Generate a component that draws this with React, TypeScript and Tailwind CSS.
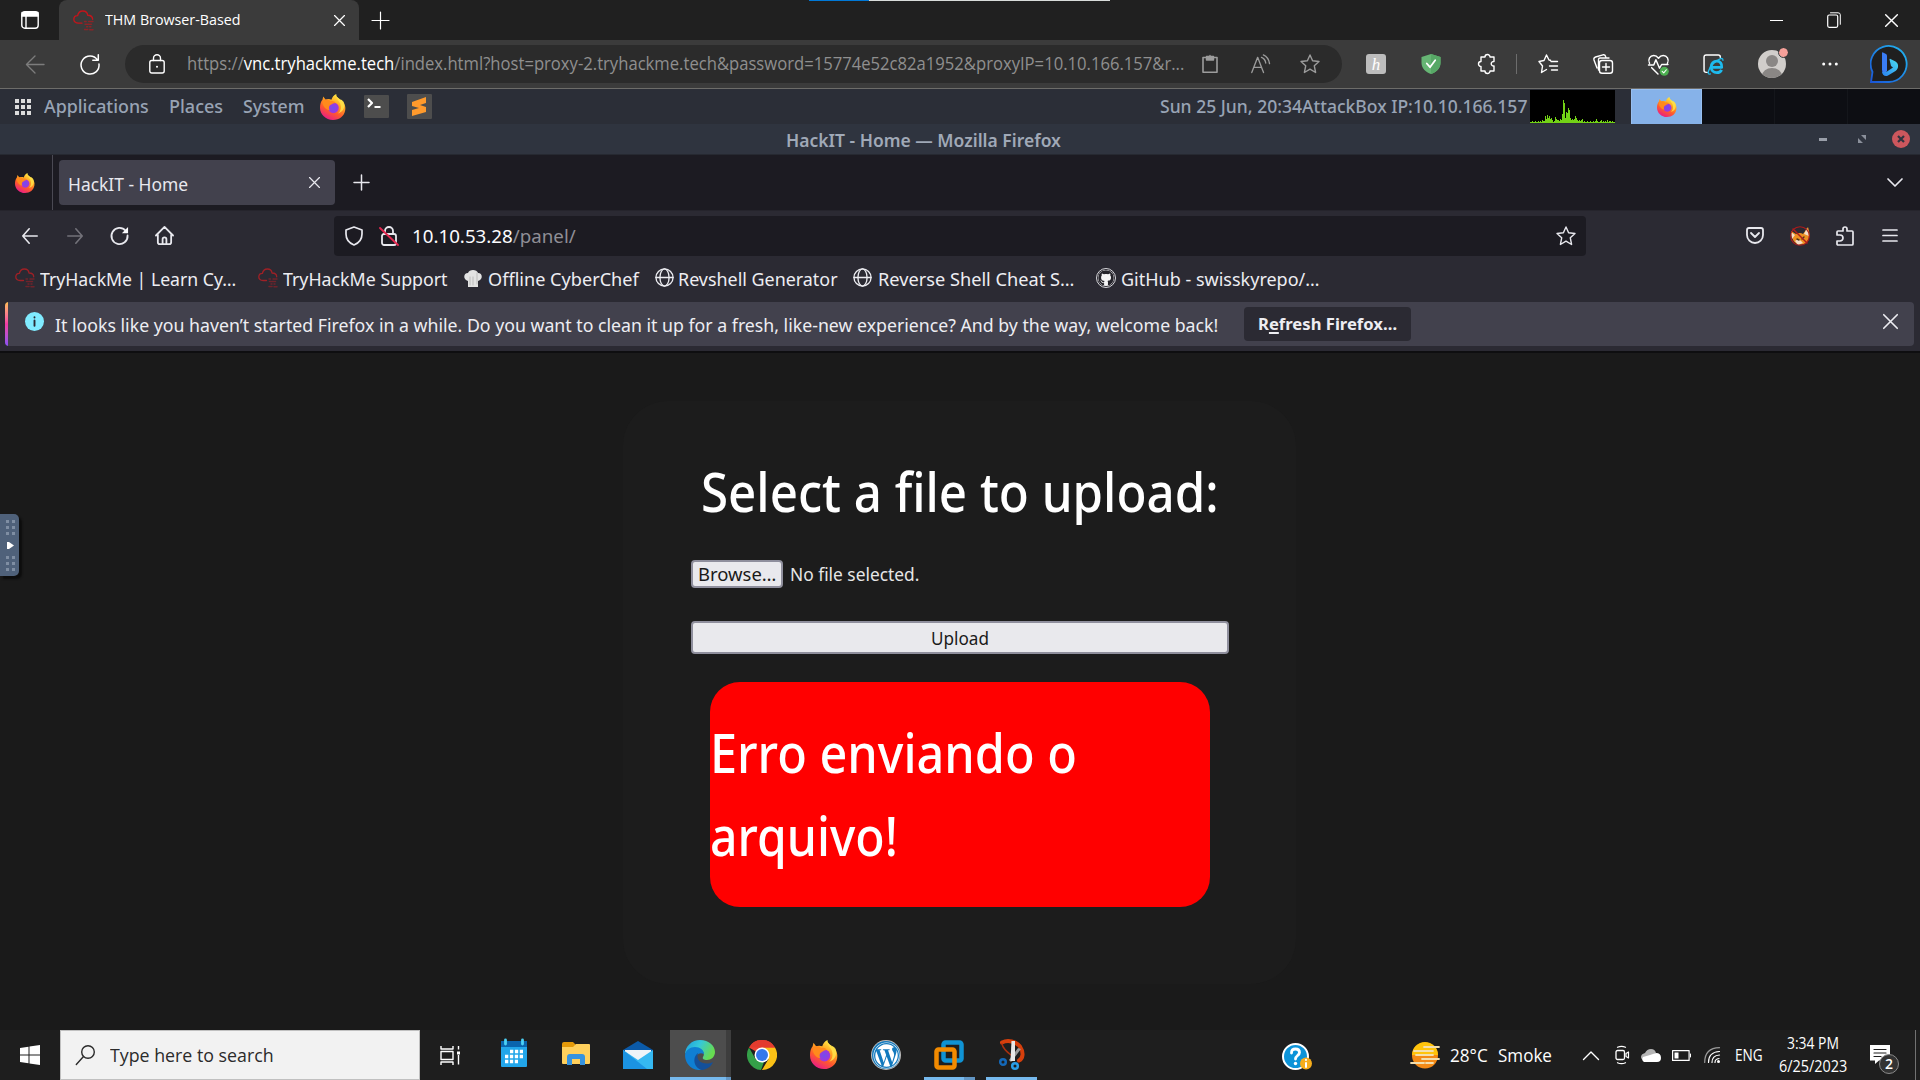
import React, { useLayoutEffect, useRef, useState } from "react";
import { FaWordpress, FaGithub } from "react-icons/fa";

/** One line of text condensed or widened to fill the width of its box. */
function Fit({ className, children }: { className: string; children: React.ReactNode }) {
  const outer = useRef<HTMLSpanElement>(null);
  const inner = useRef<HTMLSpanElement>(null);
  const [scale, setScale] = useState(1);
  useLayoutEffect(() => {
    const measure = () => {
      if (outer.current && inner.current) {
        setScale(outer.current.offsetWidth / inner.current.offsetWidth);
      }
    };
    measure();
    document.fonts.ready.then(measure);
  }, []);
  return (
    <span ref={outer} className={"block shrink-0 whitespace-nowrap " + className}>
      <span ref={inner} className="inline-block origin-left" style={{ transform: `scaleX(${scale})` }}>
        {children}
      </span>
    </span>
  );
}

type IconProps = { className: string; box?: string; children: React.ReactNode };
function Icon({ className, box = "0 0 20 20", children }: IconProps) {
  return (
    <svg
      viewBox={box}
      className={"block shrink-0 overflow-visible " + className}
      fill="none"
      stroke="currentColor"
      strokeWidth="1.4"
      strokeLinecap="round"
      strokeLinejoin="round"
    >
      {children}
    </svg>
  );
}

function Firefox({ className }: { className: string }) {
  return (
    <svg viewBox="0 0 32 32" preserveAspectRatio="none" className={"block shrink-0 " + className}>
      <defs>
        <linearGradient id="ffBody" x1="0.8" y1="0.05" x2="0.3" y2="1">
          <stop offset="0" stopColor="#fff34a" />
          <stop offset="0.35" stopColor="#ffa321" />
          <stop offset="0.65" stopColor="#ff5a2c" />
          <stop offset="1" stopColor="#e8198b" />
        </linearGradient>
        <radialGradient id="ffCore">
          <stop offset="0" stopColor="#6f4df0" />
          <stop offset="1" stopColor="#a436d9" />
        </radialGradient>
      </defs>
      <path d="M20 0c0 3 1 4 4 6 1 1 1 2 2 1l1 1c3 4 5 7 4 12-1 7-7 12-15 12C7 32 0 25 0 17c0-4 1-8 3-10l1-4 3 4c2-1 5-1 7 0 1-3 3-6 6-7z" fill="url(#ffBody)" />
      <circle cx="16.500" cy="17" r="6.600" fill="url(#ffCore)" />
      <path d="M3 9c3-3 7-3 10 0 3-1 5 0 6 2-2 0-4 1-5 2-2 1-3 2-3 4 0 1 0 2 1 3-4 0-9-4-9-11z" fill="#ff8a1c" />
      <path d="M20 0c0 5 2 7 4 10 3 5 2 11-2 14 6-2 8-6 8-11 0-5-4-6-6-7-3-2-4-3-4-6z" fill="#ffe24a" opacity=".85" />
    </svg>
  );
}

function ThmCloud({ className, color }: { className: string; color: string }) {
  return (
    <Icon className={className}>
      <g stroke={color} strokeWidth="1.3">
        <path d="M8.5 12.500H5C2.500 12.500 .8 11 .8 9s1.500-3.600 3.600-3.600C5 2.600 6.800 1 9.300 1c2.700 0 4.500 1.800 4.700 4 2.800.1 4.700 1.800 4.700 3.800" />
        <path d="M11 11h2M15 11h4M11.500 13.500h6M13 16h1M16 16h1M11 18.500h3M16 18.800h3" strokeDasharray="1.500 1" strokeWidth="1.500" opacity=".6" />
      </g>
    </Icon>
  );
}

function Globe({ className }: { className: string }) {
  return (
    <Icon className={className}>
      <circle cx="10" cy="10" r="9" />
      <ellipse cx="10" cy="10" rx="4.800" ry="9" />
      <path d="M1 10h18" />
    </Icon>
  );
}

const Star = ({ className }: { className: string }) => (
  <Icon className={className}>
    <path d="M10 1l2.600 5.800 6.400.7-4.700 4.300 1.300 6.700L10 15.200l-5.600 3.300 1.300-6.700L1 7.500l6.400-.7z" />
  </Icon>
);

const Cross = ({ className }: { className: string }) => (
  <Icon className={className} box="0 0 10 10">
    <path d="M.5.5l9 9M9.500.5l-9 9" strokeWidth="1.1" />
  </Icon>
);

function EdgeTabs() {
  return (
    <div className="flex h-10 items-center bg-[#202020] text-white">
      <Icon className="ml-[21px] size-[18px]" box="0 0 18 18">
        <rect x=".8" y=".8" width="16.400" height="16.400" rx="3" />
        <path d="M1 1.500h16V5H1z" fill="white" />
        <path d="M5 5v12" />
      </Icon>
      <div className="ml-5 flex h-10 w-[300px] items-center rounded-t-lg bg-[#3b3b3b]">
        <ThmCloud className="ml-3.5 h-[21px] w-[21px]" color="#c3151b" />
        <Fit className="mb-0.5 ml-[11px] w-[135px] text-[15px] leading-none">THM Browser-Based</Fit>
        <Cross className="ml-[94px] size-[11px]" />
      </div>
      <Icon className="ml-[13px] size-[17px]">
        <path d="M10 0v20M0 10h20" />
      </Icon>
      <div className="ml-[420px] flex h-px w-[301px] self-start bg-[#d8dcda]">
        <div className="h-px w-[60px] bg-[#0078d7]" />
      </div>
      <div className="ml-auto flex items-center">
        <div className="h-px w-[13px] bg-white" />
        <Icon className="ml-11 h-4 w-[14px]" box="0 0 14 16">
          <rect x=".7" y="3" width="10" height="12.300" rx="1.500" strokeWidth="1.200" />
          <path d="M3.500.8H11q2.300 0 2.300 2v9.500" strokeWidth="1" />
        </Icon>
        <Cross className="ml-11 mr-[22px] size-[13px]" />
      </div>
    </div>
  );
}

function EdgeToolbar() {
  return (
    <div className="flex h-[49px] items-center border-b border-[#6d6c69] bg-[#3b3b3b] text-white">
      <Icon className="ml-[25px] h-[19px] w-5 text-[#7c7c7c]">
        <path d="M19.500 10H1M10 1L1 10l9 9" />
      </Icon>
      <Icon className="ml-[35px] size-5">
        <path d="M17.500 6A9 9 0 1 0 19 10M18.300.8v5.500h-5.500" strokeWidth="1.500" />
      </Icon>
      <div className="ml-[25px] flex h-[38px] w-[1217px] items-center rounded-full bg-[#2b2b2b]">
        <Icon className="ml-6 h-5 w-4" box="0 0 16 20">
          <rect x=".8" y="6.500" width="14.400" height="12.500" rx="2" />
          <path d="M4.500 6.500V4.300a3.500 3.500 0 0 1 7 0v2.200" />
          <circle cx="8" cy="12.700" r="1" fill="white" stroke="none" />
        </Icon>
        <Fit className="ml-[22px] w-[997px] text-[17.5px] leading-none text-[#8f8f8f]">
          https://<span className="text-white">vnc.tryhackme.tech</span>
          /index.html?host=proxy-2.tryhackme.tech&amp;password=15774e52c82a1952&amp;proxyIP=10.10.166.157&amp;r...
        </Fit>
        <Icon className="ml-[18px] h-[18px] w-4 text-[#9c9c9c]" box="0 0 16 18">
          <path d="M4 2.500H1v14.700h14V2.500h-3" strokeWidth="1.600" />
          <path d="M4.500 1.500h7V5h-7zM8 .5V2" fill="#9c9c9c" />
        </Icon>
        <Icon className="ml-[33px] h-5 w-[19px] text-[#9c9c9c]">
          <path d="M.8 19L7 3l6.200 16M3 13.500h8M11 3q4 1.500 4.500 6M13 .5q5.500 2.500 6.500 9" />
        </Icon>
        <Star className="ml-[30px] size-5 text-[#9c9c9c]" />
      </div>
      <div className="ml-6 flex h-5 w-5 shrink-0 items-center justify-center rounded-[3px] bg-[#bdbdbd] font-['Liberation_Serif',serif] text-[17px] italic leading-none text-white">
        h
      </div>
      <Icon className="ml-[35px] size-5">
        <path d="M10 0l9.500 3v6c0 5-4 9-9.500 11C4.500 18 .5 14 .5 9V3z" fill="#66b574" stroke="none" />
        <path d="M10 0l9.500 3v6c0 5-4 9-9.500 11z" fill="#57a866" stroke="none" />
        <path d="M5.800 9.500l3.200 3.700 5.200-7" strokeWidth="1.800" />
      </Icon>
      <Icon className="ml-9 size-5">
        <path d="M4 3h4a2.500 2.500 0 0 1 5 0h4v4.500a2.300 2.300 0 1 0 0 4.500v5h-4a2.500 2.500 0 0 1-5 0H4v-4.500a2.500 2.500 0 0 1 0-5z" />
      </Icon>
      <div className="ml-[19px] h-5 w-px bg-[#6d6d6d]" />
      <Icon className="ml-[21px] size-5">
        <path d="M12.500 6.300L11 6l-2.500-5L6 6.500l-5 1L4.500 12l-1 6.500 5-3M13 7.500h6.500M11.500 12h8M13.500 16h6" />
      </Icon>
      <Icon className="ml-[35px] size-5">
        <rect x="6.500" y="6.500" width="13" height="12.700" rx="2.500" />
        <path d="M13 9.500v7M9.500 13h7M4 14L1 6Q.4 3.800 2.500 3L10 .8q2-.4 2.500 1.500l.5 1.400M5.500 16V5.500q0-1.500 1.500-1.500h9" />
      </Icon>
      <Icon className="ml-[35px] size-[21px]">
        <path d="M1.500 9C-.5 5 2 1.500 5.500 1.500c2 0 3.500 1.200 4.500 2.500 1-1.300 2.500-2.500 4.500-2.500C18 1.500 20.500 5 18.500 9M.5 10.500h5l2-5 3.500 8 2-3.500h6M3.500 13l6 6" />
        <circle cx="15.500" cy="16.500" r="4.300" fill="#4caf50" stroke="none" />
        <path d="M13.500 16.500l1.500 1.500 2.500-3" strokeWidth="1" />
      </Icon>
      <Icon className="ml-[34px] size-[21px]">
        <path d="M4 17.500H3q-2 0-2-2V3q0-2 2-2h11.500q2 0 2 2" />
        <path d="M8.500 12.800h9.300c.4-3.700-1.500-6-4.600-6S7.800 9.300 7.800 12.300s2.200 5.500 5.400 5.500c2.100 0 3.700-.9 4.500-2.700" stroke="#1ebbee" strokeWidth="2.700" strokeLinecap="butt" />
        <path d="M7 19c-4 1.500-1.500-6 3-10s9-6.500 9-3" stroke="#1ebbee" strokeWidth="1.300" />
      </Icon>
      <div className="relative ml-[34px] size-7 shrink-0">
        <svg viewBox="0 0 28 28" className="size-7">
          <clipPath id="face"><circle cx="14" cy="14" r="14" /></clipPath>
          <g clipPath="url(#face)">
            <rect width="28" height="28" fill="#d1cecb" />
            <circle cx="14" cy="11" r="6" fill="#8a8785" />
            <ellipse cx="14" cy="26" rx="10" ry="8" fill="#8a8785" />
          </g>
        </svg>
        <span className="absolute -right-0.5 -top-0.5 size-[9px] rounded-full bg-[#f6a19a] outline outline-1 outline-[#3b3b3b]" />
      </div>
      <Icon className="ml-9 h-1 w-4" box="0 0 16 4">
        <g fill="white" stroke="none"><circle cx="1.700" cy="2" r="1.500" /><circle cx="8" cy="2" r="1.500" /><circle cx="14.300" cy="2" r="1.500" /></g>
      </Icon>
      <svg viewBox="0 0 38 38" className="ml-8 size-[38px] shrink-0">
        <defs>
          <linearGradient id="bingRing" x1="1" y1="0" x2="0" y2="1"><stop offset="0" stopColor="#22b8f0" /><stop offset="1" stopColor="#1a55d8" /></linearGradient>
          <linearGradient id="bingB" x1="0" y1="1" x2="1" y2="0"><stop offset="0" stopColor="#2a80f0" /><stop offset="1" stopColor="#4ae0f0" /></linearGradient>
        </defs>
        <path d="M1 37l1.500-10A18 18 0 1 1 19 37z" fill="#1f1f1f" stroke="url(#bingRing)" strokeWidth="1.800" />
        <path d="M12 8q0-1 1-.6l3 1.600q1 .6 1 2V26l-3 3q-2-1.500-2-4z" fill="#3a7cf5" />
        <path d="M19.500 14.500q0-1 1-.6l5 2.500c3.500 2 3.500 7 0 9.500L18 30.500c-3 1.500-6-.5-6-4 1 1 3 1 5 0l6-4-2-1.500z" fill="url(#bingB)" />
      </svg>
    </div>
  );
}

const load = [1, 1, 2, 1, 1, 2, 1, 1, 2, 1, 2, 1, 3, 2, 2, 7, 4, 8, 5, 7, 4, 5, 3, 1, 2, 6, 4, 3, 3, 2, 4, 3, 9, 23, 20, 5, 11, 10, 15, 13, 5, 3, 4, 3, 4, 7, 5, 3, 2, 3, 2, 3, 4, 1, 2, 1, 1, 2, 1, 1, 2, 1, 1, 2, 1, 2, 4, 2, 1, 1, 2, 3, 1, 2, 1, 2, 1, 3, 1, 2, 2, 1, 2, 1, 1];

function MatePanel() {
  return (
    <div className="flex h-[35px] items-center bg-[#2b2e37] font-['Noto_Sans',sans-serif] text-[18px] font-medium leading-none text-[#98a3b4]">
      <div className="ml-[15px] grid w-4 shrink-0 grid-cols-3 gap-0.5">
        {Array.from({ length: 9 }, (_, i) => <span key={i} className="size-1 bg-[#dcdcdc]" />)}
      </div>
      <Fit className="mb-0.5 ml-[13px] w-[105px]">Applications</Fit>
      <Fit className="mb-0.5 ml-[20px] w-[54px]">Places</Fit>
      <Fit className="mb-0.5 ml-[20px] w-[61px]">System</Fit>
      <Firefox className="ml-4 h-[26px] w-[26px]" />
      <Icon className="ml-[18px] h-[23px] w-[25px]" box="0 0 25 23">
        <rect width="25" height="23" rx="1" fill="#4d4d4d" stroke="none" />
        <path d="M4 4l4 4-4 4M10.500 12h6" stroke="white" strokeWidth="2.200" strokeLinecap="butt" />
      </Icon>
      <Icon className="ml-[18px] h-[25px] w-[25px]" box="0 0 25 25">
        <rect width="25" height="25" rx="1" fill="#4d4d4d" stroke="none" />
        <path d="M5 8l14-5v6l-6 2 6 2v5L5 22v-6l7-2-7-2z" fill="#ff9a2c" stroke="none" />
      </Icon>
      <Fit className="mb-0.5 ml-[728px] w-[367px]">Sun 25 Jun, 20:34AttackBox IP:10.10.166.157</Fit>
      <div className="ml-[3px] flex h-[33px] w-[85px] shrink-0 items-end bg-black">
        {load.map((v, i) => <span key={i} className="w-px bg-[#73d216]" style={{ height: v }} />)}
      </div>
      <div className="ml-4 flex h-full w-[71px] shrink-0 items-center justify-center border border-b-0 border-[#98bff0] bg-[#86b2e9]">
        <Firefox className="h-5 w-5" />
      </div>
      <div className="flex h-full grow bg-[#0d0e13]">
        <div className="w-[73px] border-r border-[#14161b]" />
        <div className="w-[73px] border-r border-[#14161b]" />
      </div>
    </div>
  );
}

function WindowTitle() {
  return (
    <div className="flex h-[31px] items-center border-b border-[#262931] bg-[#2f343f] text-[#a0a9b7]">
      <Fit className="ml-[786px] mt-1 w-[275px] font-['Noto_Sans',sans-serif] text-[17.5px] font-semibold leading-none">HackIT - Home — Mozilla Firefox</Fit>
      <div className="ml-[758px] h-[3px] w-2 bg-[#9a9fa9]" />
      <Icon className="ml-[31px] size-2" box="0 0 8 8">
        <path d="M3 0h5v5zM0 3v5h5z" fill="#8b909b" stroke="none" />
      </Icon>
      <Icon className="ml-[26px] size-[18px]" box="0 0 18 18">
        <circle cx="9" cy="9" r="9" fill="#cc575d" stroke="none" />
        <path d="M6 6l6 6M12 6l-6 6" stroke="#2f343f" strokeWidth="2.200" strokeLinecap="butt" />
      </Icon>
    </div>
  );
}

function FirefoxTabs() {
  return (
    <div className="flex h-[55px] items-center bg-[#1c1b22] text-[#e8e8ee]">
      <Firefox className="ml-[15px] h-5 w-5" />
      <div className="ml-[17px] h-full w-px bg-[#4a4953]" />
      <div className="ml-1.5 flex h-[45px] w-[276px] items-center rounded bg-[#42414d]">
        <Fit className="ml-[9px] mt-0.5 w-[120px] font-['Noto_Sans',sans-serif] text-[18px] leading-none">HackIT - Home</Fit>
        <Cross className="ml-[121px] size-[11px]" />
      </div>
      <Icon className="ml-[19px] size-[15px]"><path d="M10 0v20M0 10h20" strokeWidth="2" /></Icon>
      <Icon className="ml-auto mr-[17px] h-[9px] w-4" box="0 0 16 9"><path d="M1 1l7 7 7-7" strokeWidth="1.700" /></Icon>
    </div>
  );
}

function FirefoxNav() {
  return (
    <div className="flex h-[50px] items-center border-t border-[#25242c] text-[#e8e8ee]">
      <Icon className="ml-[21px] h-4 w-[18px]"><path d="M19 10H1M9 1L1 10l8 9" strokeWidth="2" /></Icon>
      <Icon className="ml-[27px] h-4 w-[18px] text-[#73727a]"><path d="M1 10h18M11 1l8 9-8 9" strokeWidth="2" /></Icon>
      <Icon className="ml-[26px] size-[19px]">
        <path d="M16.500 5A8.500 8.500 0 1 0 18.500 10" strokeWidth="1.900" />
        <path d="M19 1v6.500h-6.500z" fill="#fbfbfe" stroke="none" />
      </Icon>
      <Icon className="ml-[26px] size-[19px]">
        <path d="M3 9v8q0 2 2 2h10q2 0 2-2V9M1 10l9-9 9 9M8 19v-5q0-2 2-2t2 2v5" strokeWidth="1.900" />
      </Icon>
      <div className="ml-40 flex h-10 w-[1252px] items-center rounded bg-[#1c1b22]">
        <Icon className="ml-[11px] h-5 w-[18px]" box="0 0 18 20">
          <path d="M9 1l8 3v4c0 5-3 9-8 11-5-2-8-6-8-11V4z" strokeWidth="1.700" />
        </Icon>
        <Icon className="ml-[17px] h-5 w-[18px]" box="0 0 18 20">
          <rect x="2" y="8" width="14" height="11" rx="2" strokeWidth="1.800" />
          <path d="M5 8V5a4 4 0 0 1 8 0v3" strokeWidth="1.800" />
          <path d="M0 2l18 17" stroke="#e22850" strokeWidth="1.900" />
        </Icon>
        <Fit className="ml-[14px] mt-0.5 w-[164px] font-['Noto_Sans',sans-serif] text-[18.5px] leading-none text-[#8f8e96]">
          <span className="text-[#fbfbfe]">10.10.53.28</span>/panel/
        </Fit>
        <Star className="ml-auto mr-2.5 size-5" />
      </div>
      <Icon className="ml-40 h-[17px] w-[18px]" box="0 0 18 17">
        <path d="M3 1h12q2 0 2 2v5a8 8 0 0 1-16 0V3q0-2 2-2zM5 6l4 4 4-4" strokeWidth="1.800" />
      </Icon>
      <Icon className="ml-[26px] size-5">
        <path d="M1 5l5 3q4-2 7 0l5-7q3 9 0 14-4 5-11 3-5-2-6-13z" fill="#ed8f20" stroke="none" />
        <path d="M1 6l4 3-3 4zM17 2l-3 6 5 2zM5 15q4-4 8 2l-5 2z" fill="#f3ddc6" stroke="none" />
        <path d="M7 13l2 1M14 11l-2 2" stroke="#51341c" />
        <circle cx="10" cy="10" r="9.300" stroke="#ae1b1b" strokeWidth="1.100" /><path d="M3 3l14 14" stroke="#ae1b1b" strokeWidth="1.400" />
      </Icon>
      <Icon className="ml-[26px] h-5 w-[18px]" box="0 0 18 20">
        <path d="M1 9V6q0-1 1-1h5V3a2 2 0 0 1 4 0v2h5q1 0 1 1v12q0 1-1 1H2q-1 0-1-1v-3h3a2.500 2.500 0 0 0 0-6z" strokeWidth="1.700" />
      </Icon>
      <Icon className="ml-[28px] h-[13px] w-4" box="0 0 16 13"><path d="M1 1h14M1 6.500h14M1 12h14" strokeWidth="1.700" /></Icon>
    </div>
  );
}

function Bookmarks() {
  return (
    <div className="flex h-[42px] items-center pb-[7px] font-['Noto_Sans',sans-serif] text-[18px] leading-none text-[#ededf2]">
      <ThmCloud className="ml-[15px] size-5" color="#9f2026" />
      <Fit className="ml-[5px] mt-0.5 w-[196px]">TryHackMe | Learn Cy…</Fit>
      <ThmCloud className="ml-[22px] size-5" color="#9f2026" />
      <Fit className="ml-[5px] mt-0.5 w-[165px]">TryHackMe Support</Fit>
      <Icon className="ml-4 h-[18px] w-[18px]" box="0 0 18 18">
        <path d="M4 12C-1 11-1 4 4 4c1-4 9-4 10 0 5 0 5 7 0 8v6H4z" fill="#e3e3e3" stroke="none" />
        <path d="M6 8v8M9 8v8M13 4v11" stroke="#bbb" strokeWidth="1" />
      </Icon>
      <Fit className="ml-1.5 mt-0.5 w-[151px]">Offline CyberChef</Fit>
      <Globe className="ml-4 size-[19px]" />
      <Fit className="ml-1 mt-0.5 w-[160px]">Revshell Generator</Fit>
      <Globe className="ml-[15px] size-[19px]" />
      <Fit className="ml-[6px] mt-0.5 w-[196px]">Reverse Shell Cheat S…</Fit>
      <span className="ml-[22px] flex size-5 shrink-0 items-center justify-center rounded-full border border-[#d8d8dc]">
        <FaGithub className="size-4 shrink-0 rounded-full bg-[#f4f4f5] text-[#24232a]" />
      </span>
      <Fit className="ml-[5px] mt-0.5 w-[199px]">GitHub - swisskyrepo/…</Fit>
    </div>
  );
}

function RefreshNotice() {
  return (
    <div className="ml-[5px] mr-1.5 flex h-11 items-center overflow-hidden rounded bg-[#42414d] font-['Noto_Sans',sans-serif] leading-none text-[#ededf2]">
      <div className="h-full w-[3px] bg-linear-to-b from-[#ffbd4f] via-[#f23aa4] to-[#8a4df5]" />
      <Icon className="mb-1.5 ml-[17px] size-[19px]">
        <circle cx="10" cy="10" r="10" fill="#80ebff" stroke="none" />
        <path d="M10 9v5.500M10 5.500v.3" stroke="#2b2a33" strokeWidth="2" />
      </Icon>
      <Fit className="ml-[11px] mt-0.5 w-[1163px] text-[18px]">
        It looks like you haven’t started Firefox in a while. Do you want to clean it up for a fresh, like-new experience? And by the way, welcome back!
      </Fit>
      <button className="ml-[26px] h-[34px] w-[167px] rounded bg-[#2b2a33] px-3.5">
        <Fit className="w-[139px] text-left text-[16.5px] font-bold leading-none">R<span className="underline decoration-2 underline-offset-2">e</span>fresh Firefox…</Fit>
      </button>
      <Cross className="mb-1.5 ml-auto mr-4 size-[15px]" />
    </div>
  );
}

function UploadPage() {
  return (
    <main className="relative h-[677px] bg-[#1a1a1a] pt-12">
      <section className="ml-[623px] h-[583px] w-[673px] rounded-[45px] bg-[#1c1c1c] px-[68px] pt-[49px] font-['Noto_Sans',sans-serif]">
        <h1 className="ml-[10px] text-[54px] font-medium leading-[83px] text-white"><Fit className="w-[518px]">Select a file to upload:</Fit></h1>
        <div className="mt-[27px] flex h-7 items-center text-[18px] leading-none">
          <button className="h-7 w-[92px] rounded border-2 border-[#8f8f9d] bg-[#e9e9ed] px-[5px] text-[#1a1a1a]">
            <Fit className="w-[78px] text-left">Browse…</Fit>
          </button>
          <Fit className="ml-[7px] w-[129px] text-[#e6e6e6]">No file selected.</Fit>
        </div>
        <button className="mt-[33px] flex h-[33px] w-[538px] items-center justify-center rounded border-2 border-[#8f8f9d] bg-[#e9e9ed] text-[18px] leading-none text-[#1a1a1a]">
          <Fit className="w-[58px] text-left">Upload</Fit>
        </button>
        <div className="ml-[19px] mt-7 h-[225px] w-[500px] rounded-[30px] bg-[#ff0000] pt-[29px] text-[54px] font-medium leading-[83px] text-white">
          <Fit className="w-[367px]">Erro enviando o</Fit>
          <Fit className="w-[188px]">arquivo!</Fit>
        </div>
      </section>
      <div className="absolute left-0 top-[161px] flex h-[62px] w-[19px] flex-col items-center justify-center gap-[7px] rounded-r-[5px] bg-[#4f617a] pl-0.5 shadow-[3px_3px_2px_#0d0d0d]">
        <HandleDots />
        <svg viewBox="0 0 7 7" className="size-[7px]"><path d="M0 0h2l5 3.500L2 7H0z" fill="white" /></svg>
        <HandleDots />
      </div>
    </main>
  );
}

function HandleDots() {
  return (
    <div className="grid grid-cols-2 gap-[3px]">
      {Array.from({ length: 6 }, (_, i) => <span key={i} className="size-[3px] bg-[#7f8ea3]" />)}
    </div>
  );
}

function Taskbar() {
  return (
    <footer className="flex h-[50px] items-center bg-[#1e1e1e] text-white">
      <Icon className="ml-5 size-5"><path d="M0 3l8.500-1.300v7.800H0zM9.500 1.500L20 0v9.500H9.500zM0 10.500h8.500v7.800L0 17zM9.500 10.500H20V20L9.500 18.500z" fill="white" stroke="none" /></Icon>
      <div className="ml-5 flex h-full w-[360px] shrink-0 items-center border border-[#c0c0c0] bg-[#f2f2f2] text-[#2b2b2b]">
        <Icon className="ml-3.5 h-5 w-[21px]"><circle cx="12.500" cy="7" r="6.300" /><path d="M8 11.500L.8 19.500" /></Icon>
        <Fit className="ml-[14px] w-[164px] text-[18px] leading-none">Type here to search</Fit>
      </div>
      <Icon className="ml-5 size-5">
        <path d="M1 1v3h12V1M1 6.500h12v8H1zM1 20v-3h12v3M18.500 1v3.500M18.500 10v9.500" strokeLinecap="butt" />
        <path d="M17 6.500h3v3h-3z" fill="white" stroke="none" />
      </Icon>
      <Icon className="mb-1 ml-[41px] h-7 w-[26px]" box="0 0 26 28">
        <path d="M0 3h26v24q0 1-1 1H1q-1 0-1-1z" fill="#22a6ea" stroke="none" /><path d="M0 2h26v6H0z" fill="#0a64ad" stroke="none" />
        <path d="M4.500 1v4M21.500 1v4" stroke="#4cd1f5" strokeWidth="2.800" />
        <path d="M9 12.500h13M4 17.500h18M4 22.500h13" stroke="white" strokeWidth="3.300" strokeDasharray="3.300 1.600" strokeLinecap="butt" />
      </Icon>
      <Icon className="mb-0.5 ml-[35px] h-6 w-7" box="0 0 28 24">
        <path d="M0 2q0-2 2-2h9l3 3v4H0z" fill="#e59a09" stroke="none" /><path d="M0 5h11l3-3h13q1 0 1 1v18q0 1-1 1H1q-1 0-1-1z" fill="#ffd05c" stroke="none" />
        <path d="M5 23v-8q0-3 3-3h12q3 0 3 3v8h-5v-6h-8v6z" fill="#3693df" stroke="none" />
      </Icon>
      <Icon className="ml-[33px] h-7 w-[30px]" box="0 0 30 28">
        <path d="M0 9L15 0l15 9v8H0z" fill="#0b5aa8" stroke="none" /><path d="M2 9h26v10H2z" fill="#eef4f8" stroke="none" />
        <path d="M0 9l15 10L30 9v19H0z" fill="#35b8f1" stroke="none" /><path d="M0 28V9l24 19z" fill="#1b93e2" stroke="none" />
      </Icon>
      <div className="ml-[17px] flex h-full w-14 shrink-0 flex-col items-center justify-between border-b-[3px] border-[#76b9ed] bg-[#4d4d4d] pl-[3px] pt-2.5">
        <svg viewBox="0 0 30 30" className="size-[30px]">
          <defs>
            <linearGradient id="edgeTop" x1="0" y1="0" x2="1" y2=".4"><stop offset="0" stopColor="#1b9ce0" /><stop offset=".5" stopColor="#36c8d8" /><stop offset="1" stopColor="#67db50" /></linearGradient>
          </defs>
          <path d="M0 15C0 6 7 0 15 0c9 0 15 6 15 12 0 5-4 8-8 8-3 0-5-1-4-3 3-4-2-9-8-9C5 8 1 11 0 15z" fill="url(#edgeTop)" />
          <path d="M0 15C1 10 5 7 10 7c5 0 9 3 9 7-6-3-9 3-8 8 1 4 3 7 6 8C7 31 0 24 0 15z" fill="#0f7fd3" />
          <path d="M13 13c-7 5-3 17 5 17 4-1 8-3 10-8-8 4-18 0-15-9z" fill="#14509a" />
        </svg>
      </div>
      <div className="h-full w-[5px] border-b-[3px] border-[#6296c4] bg-[#3d3d3d]" />
      <svg viewBox="0 0 30 30" className="ml-4 size-[30px] shrink-0">
        <path d="M15 15L2 7.500A15 15 0 0 1 28 7.500z" fill="#ea4335" /><path d="M15 15V7.500h13A15 15 0 0 1 15 30l6.500-11z" fill="#fbc116" /><path d="M2 7.500L8.500 19 15 22l2 0-3 8A15 15 0 0 1 2 7.500z" fill="#34a048" />
        <path d="M2 7.500A15 15 0 0 1 28 7.500H15z" fill="#e33b2e" /><circle cx="15" cy="15" r="7.500" fill="white" /><circle cx="15" cy="15" r="6" fill="#3478ec" />
      </svg>
      <Firefox className="mb-0.5 ml-[33px] h-[29px] w-[28px]" />
      <span className="ml-[34px] flex size-[28px] shrink-0 items-center justify-center rounded-full bg-[#1279bd] ring-1 ring-white/70"><FaWordpress className="size-[27px] text-white" /></span>
      <div className="ml-6 flex h-full w-10 shrink-0 items-center justify-end border-b-[3px] border-[#76b9ed] pt-[3px]">
        <Icon className="size-[30px]" box="0 0 30 30">
          <rect x="9.500" y="2.500" width="18" height="18" rx="2" stroke="#1093d4" strokeWidth="4.500" /><rect x="2.500" y="9.500" width="18" height="18" rx="2" stroke="#f38b00" strokeWidth="4.500" />
        </Icon>
      </div>
      <div className="h-full w-[11px] border-b-[3px] border-[#6296c4]" />
      <div className="ml-[11px] flex h-full w-[51px] shrink-0 items-center justify-center border-b-[3px] border-[#76b9ed] pt-[3px]">
        <Icon className="h-[30px] w-[26px]" box="0 0 26 30">
          <path d="M3 2.500c6-3 14-1 18 4 4 6 3 12-1 14" stroke="#d63f0c" strokeWidth="4" /><path d="M3 4c1 5 5 8 9 11" stroke="#a83010" strokeWidth="1.500" />
          <path d="M22 9L12 22l-2-2L19 8z" fill="#9c9c9c" stroke="none" /><path d="M12.500 1h3.500v20h-4.500z" fill="#e9e9e9" stroke="none" />
          <circle cx="4" cy="22" r="2.800" stroke="#1468b8" strokeWidth="2.500" /><circle cx="16" cy="26" r="2.800" stroke="#2a9de6" strokeWidth="2.500" />
        </Icon>
      </div>
      <Icon className="ml-[245px] mt-1 h-[28px] w-[30px]" box="0 0 30 28">
        <circle cx="13.500" cy="13.500" r="12.500" fill="#0c93d8" stroke="white" strokeWidth="2" />
        <path d="M9.500 10q0-4 4-4t4 3.500c0 3-4 3-4 6.500" stroke="white" strokeWidth="2.800" /><circle cx="13.500" cy="20.500" r="1.700" fill="white" stroke="none" />
        <circle cx="24" cy="20.500" r="6" fill="#f6ad1c" stroke="none" /><path d="M24 20v4M24 16.800v.2" stroke="white" strokeWidth="2" />
      </Icon>
      <Icon className="ml-[98px] h-[27px] w-[30px]" box="0 0 30 27">
        <circle cx="15" cy="13.500" r="13" fill="#f48a16" stroke="none" /><path d="M2 13a13 13 0 0 1 26 0z" fill="#ffc40c" stroke="none" />
        <path d="M14 5h15M4 9h19M6 13h17M12 17h17M1 21h13M16 21h7" stroke="#f3dfae" strokeWidth="1.800" />
      </Icon>
      <Fit className="ml-[10px] w-[38px] text-[18px] leading-none">28°C</Fit>
      <Fit className="ml-[10px] w-[54px] text-[18px] leading-none">Smoke</Fit>
      <Icon className="ml-[31px] h-[9px] w-4" box="0 0 16 9"><path d="M.5 8.500L8 1l7.500 7.500" /></Icon>
      <Icon className="ml-4 h-[18px] w-[14px]" box="0 0 14 18"><rect x="1" y="4.500" width="8.500" height="9" rx="1.500" strokeWidth="1.300" /><path d="M11 7.500l2.500-1.500v6L11 10.500zM2.500 1.300Q6.500-.5 10.500 1.300M2.500 16.700q4 1.800 8 0" strokeWidth="1.200" /></Icon>
      <Icon className="ml-3 h-[13px] w-5" box="0 0 20 13"><path d="M4 11Q0 11 0 8q0-3 4-4 2-4 6-4 4 0 5 4z" fill="#b4b4b4" stroke="none" /><path d="M3 13q-3-2-1-5l7-2 6-2q5 0 5 5 0 4-4 4z" fill="white" stroke="none" /></Icon>
      <Icon className="ml-[11px] h-[11px] w-[19px]" box="0 0 19 11"><rect x=".6" y=".6" width="16.500" height="9.800" strokeWidth="1.200" /><path d="M2.500 2.500h4v6h-4z" fill="white" stroke="none" /><path d="M18.500 4v3" strokeWidth="1" /></Icon>
      <Icon className="ml-[13px] h-4 w-4" box="0 0 16 16">
        <path d="M.7 15.500Q.7 1 15.500.7" stroke="#9a9a9a" strokeWidth="1.200" /><path d="M4.500 15.500Q4.500 5 15.500 4.500M8 15.500q0-7 7.500-7.500M11 15.500q0-3.500 4-4" strokeWidth="1.200" /><circle cx="14.500" cy="14.500" r="1.500" fill="white" stroke="none" />
      </Icon>
      <Fit className="ml-[15px] w-[28px] text-[16px] leading-none">ENG</Fit>
      <div className="ml-[16px] flex w-[68px] flex-col items-center gap-[7px] text-[15.5px] leading-none">
        <Fit className="w-[52px]">3:34 PM</Fit>
        <Fit className="w-[68px]">6/25/2023</Fit>
      </div>
      <div className="relative ml-[23px] h-5 w-5 shrink-0">
        <Icon className="h-5 w-5"><path d="M0 0h20v15.500H9L5 19v-3.500H0z" fill="white" stroke="none" /><path d="M4 4.500h12M4 8h12M4 11.500h7" stroke="#1e1e1e" strokeWidth="1.200" /></Icon>
        <span className="absolute left-[9px] top-[9px] flex size-5 items-center justify-center rounded-full border border-[#8a8a8a] bg-[#333333] text-[14px] font-semibold leading-none">2</span>
      </div>
      <div className="ml-[25px] h-full w-px bg-[#727272]" />
    </footer>
  );
}

export default function App() {
  return (
    <div className="flex h-[1080px] w-[1920px] flex-col overflow-hidden bg-[#1a1a1a] font-['Open_Sans',sans-serif]">
      <EdgeTabs />
      <EdgeToolbar />
      <MatePanel />
      <WindowTitle />
      <FirefoxTabs />
      <div className="h-[143px] border-b-2 border-[#0e0e10] bg-[#2b2a33]">
        <FirefoxNav />
        <Bookmarks />
        <RefreshNotice />
      </div>
      <UploadPage />
      <Taskbar />
    </div>
  );
}
